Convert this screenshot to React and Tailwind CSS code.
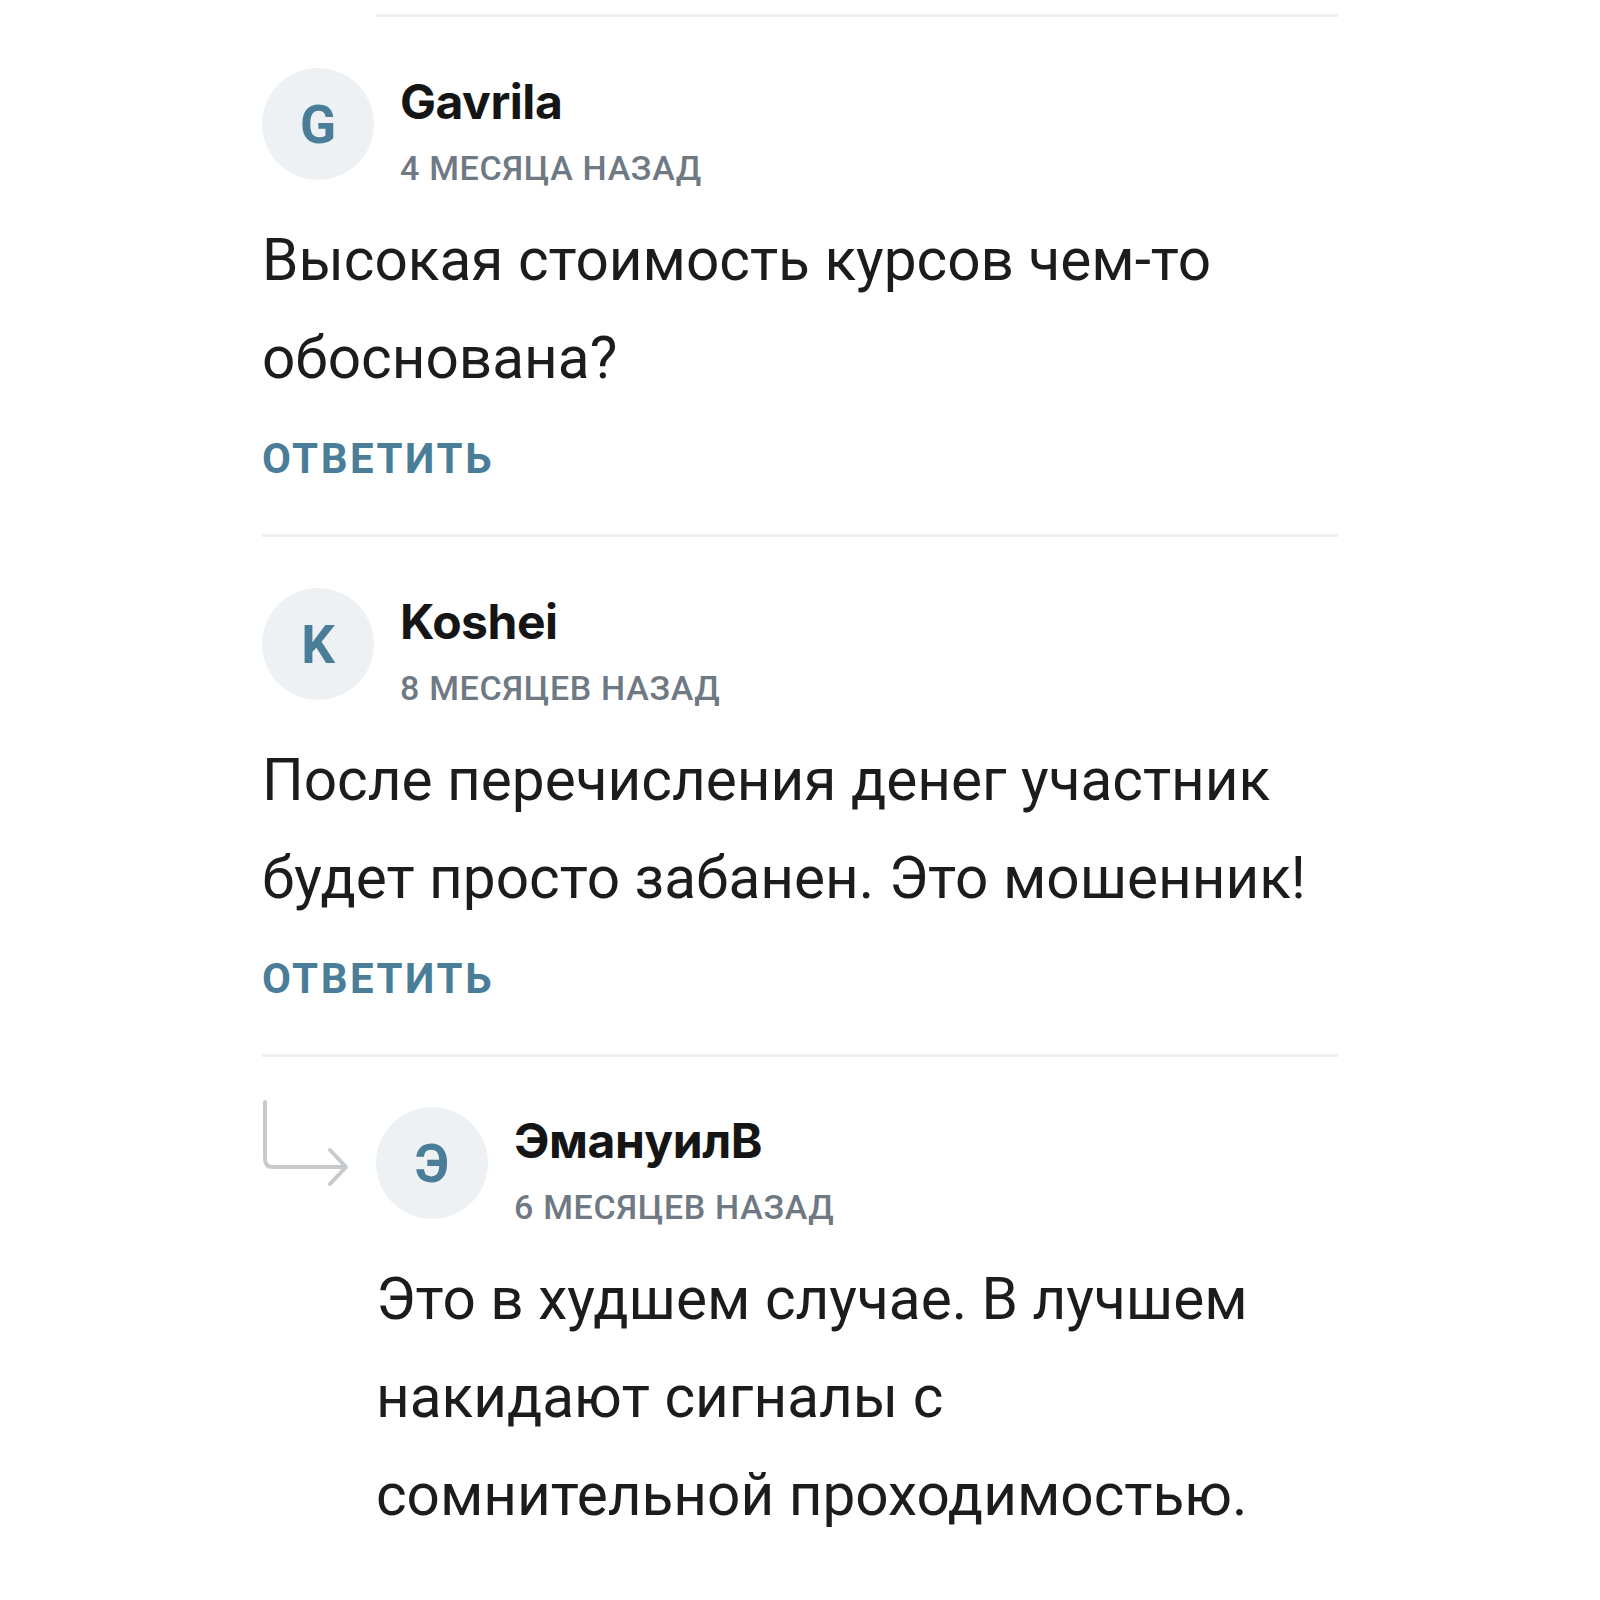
import React from 'react';

const comments = [
    {
        id: 1,
        letter: "G",
        name: "Gavrila",
        time: "4 месяца назад",
        text: "Высокая стоимость курсов чем-то обоснована?",
    },
    {
        id: 2,
        letter: "K",
        name: "Koshei",
        time: "8 месяцев назад",
        text: "После перечисления денег участник будет просто забанен. Это мошенник!",
    },
];

const reply = {
    letter: "Э",
    name: "ЭмануилВ",
    time: "6 месяцев назад",
    text: "Это в худшем случае. В лучшем накидают сигналы с сомнительной проходимостью.",
};

function Header({ letter, name, time }) {
    return (
        <div className="flex items-start gap-[26px]">
            <div className="w-[112px] h-[112px] shrink-0 rounded-full bg-[#eef1f4] flex items-center justify-center">
                <span className="mt-[3px] text-[53px] font-bold text-[#4a7e98] font-['Roboto',sans-serif] leading-none">{letter}</span>
            </div>
            <div className="flex flex-col mt-[6px]">
                <span className="text-[48px] leading-[56px] font-bold text-[#151515] font-['Inter',sans-serif] tracking-[-0.01em]">{name}</span>
                <span className="mt-[18px] text-[34px] leading-[40px] font-medium uppercase tracking-[0.02em] text-[#6f7983] font-['Roboto',sans-serif]">{time}</span>
            </div>
        </div>
    );
}

function Body({ text }) {
    return (
        <p className="mt-[23px] text-[58.5px] leading-[98px] text-[#1c1c1c] font-['Roboto',sans-serif]">{text}</p>
    );
}

export default function App() {
    return (
        <div className="w-[1600px] h-[1600px] bg-white px-[262px] pt-[14px] font-['Roboto',sans-serif]">
            {/* previous reply ends here */}
            <div className="ml-[114px] h-[3px] bg-[#eef0f2]" />

            {comments.map((c) => (
                <div key={c.id}>
                    <div className="pt-[51px] pb-[50px]">
                        <Header {...c} />
                        <Body text={c.text} />
                        <button className="mt-[27px] block text-[42px] leading-[50px] font-bold uppercase tracking-[0.06em] text-[#4a7e98] font-['Roboto',sans-serif]">
                            Ответить
                        </button>
                    </div>
                    <div className="h-[3px] bg-[#eef0f2]" />
                </div>
            ))}

            <div className="flex items-start pt-[43px]">
                <div className="w-[114px] shrink-0">
                    <svg width="88" height="90" viewBox="0 0 88 90" fill="none" stroke="#c7cacd" strokeWidth="4" strokeLinecap="round" strokeLinejoin="round">
                        <path d="M3 2 V59 Q3 67 11 67 H83" />
                        <path d="M68 50 L84 67 L68 84" />
                    </svg>
                </div>
                <div className="flex-1 pt-[7px]">
                    <Header {...reply} />
                    <Body text={reply.text} />
                </div>
            </div>
        </div>
    );
}
